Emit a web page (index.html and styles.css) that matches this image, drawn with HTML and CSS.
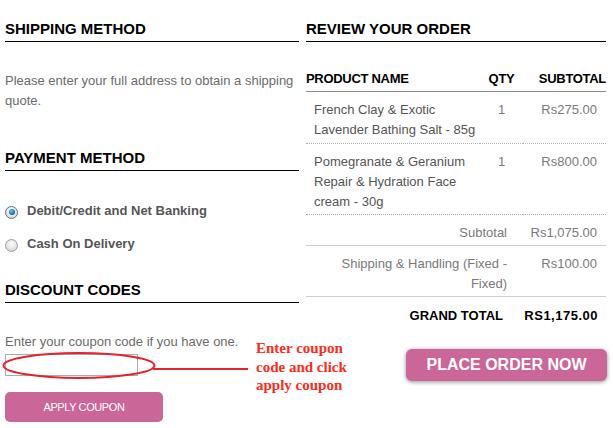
FILE: index.html
```html
<!DOCTYPE html>
<html lang="en">
<head>
<meta charset="utf-8">
<title>Checkout</title>
<link rel="stylesheet" href="styles.css">
</head>
<body>
<div class="page">
  <div class="col col-left">
    <h2 class="sec-title">SHIPPING METHOD</h2>
    <p class="note note-ship">Please enter your full address to obtain a shipping quote.</p>

    <h2 class="sec-title sec-pay">PAYMENT METHOD</h2>
    <label class="radio-row radio-first"><span class="radio checked"></span>Debit/Credit and Net Banking</label>
    <label class="radio-row radio-second"><span class="radio"></span>Cash On Delivery</label>

    <h2 class="sec-title sec-disc">DISCOUNT CODES</h2>
    <p class="note note-coupon">Enter your coupon code if you have one.</p>
    <input class="coupon-input" type="text" aria-label="Coupon code">
    <button class="btn btn-apply" type="button">APPLY COUPON</button>
  </div>

  <div class="col col-right">
    <h2 class="sec-title">REVIEW YOUR ORDER</h2>
    <table class="order">
      <colgroup>
        <col class="c-name"><col class="c-qty"><col class="c-sub">
      </colgroup>
      <thead>
        <tr><th class="th-name">PRODUCT NAME</th><th class="th-qty">QTY</th><th class="th-sub">SUBTOTAL</th></tr>
      </thead>
      <tbody>
        <tr class="item"><td class="name">French Clay &amp; Exotic Lavender Bathing Salt - 85g</td><td class="qty">1</td><td class="price">Rs275.00</td></tr>
        <tr class="item"><td class="name">Pomegranate &amp; Geranium Repair &amp; Hydration Face cream - 30g</td><td class="qty">1</td><td class="price">Rs800.00</td></tr>
        <tr class="total"><td class="label" colspan="2">Subtotal</td><td class="price">Rs1,075.00</td></tr>
        <tr class="total"><td class="label" colspan="2">Shipping &amp; Handling (Fixed - Fixed)</td><td class="price">Rs100.00</td></tr>
        <tr class="grand"><td class="label" colspan="2">GRAND TOTAL</td><td class="price">RS1,175.00</td></tr>
      </tbody>
    </table>
    <button class="btn btn-place" type="button">PLACE ORDER NOW</button>
  </div>

  <svg class="markup" width="613" height="428" viewBox="0 0 613 428" aria-hidden="true">
    <ellipse cx="79" cy="365.5" rx="75.5" ry="12.5" fill="none" stroke="#e8202a" stroke-width="2"/>
    <line x1="153" y1="369" x2="248" y2="369" stroke="#e8202a" stroke-width="2"/>
  </svg>
  <div class="markup-text">Enter coupon<br>code and click<br>apply coupon</div>
</div>
</body>
</html>
```

FILE: styles.css
```css
html, body {
  margin: 0;
  padding: 0;
  background: #fff;
}

body {
  font-family: "Liberation Sans", Arial, sans-serif;
  font-size: 13px;
  line-height: 20px;
  color: #6b6b6b;
}

.page {
  position: relative;
  width: 613px;
  height: 428px;
  overflow: hidden;
  box-sizing: border-box;
  padding: 20px 0 0 5px;
  display: grid;
  grid-template-columns: 294px 300px;
  column-gap: 7px;
  align-items: start;
}

.col {
  display: flex;
  flex-direction: column;
  align-items: flex-start;
}

.sec-title {
  align-self: stretch;
  margin: 0;
  font-size: 15px;
  line-height: 18px;
  font-weight: bold;
  color: #000;
  padding-bottom: 3px;
  border-bottom: 1px solid #000;
}

.note {
  margin: 0;
}

.note-ship { margin-top: 29px; }
.sec-pay { margin-top: 38px; }
.sec-disc { margin-top: 27px; }
.note-coupon { margin-top: 29px; }

.radio-row {
  display: flex;
  align-items: center;
  font-weight: bold;
  color: #555;
}

.radio-first { margin-top: 30px; }
.radio-second { margin-top: 13px; }

.radio {
  width: 11px;
  height: 11px;
  border-radius: 50%;
  border: 1px solid #9a9a9a;
  background: radial-gradient(circle at 50% 35%, #fcfcfc 0%, #e2e2e2 60%, #cfcfcf 100%);
  margin-right: 9px;
  margin-top: 2px;
  position: relative;
  flex: none;
}

.radio.checked {
  border-color: #5a7894;
}

.radio.checked::after {
  content: "";
  position: absolute;
  left: 2.5px;
  top: 2.5px;
  width: 6px;
  height: 6px;
  border-radius: 50%;
  background: radial-gradient(circle at 40% 35%, #6cc3f2 0%, #1f78b8 55%, #0d3f6e 100%);
}

.coupon-input {
  margin-top: 2px;
  width: 133px;
  height: 22px;
  box-sizing: border-box;
  border: 1px solid #acacac;
  background: #fff;
  padding: 0 4px;
  font: inherit;
}

.btn {
  border: 0;
  background: #cb6698;
  color: #fff;
  font-family: "Liberation Sans", Arial, sans-serif;
  cursor: pointer;
  padding: 0;
}

.btn-apply {
  margin-top: 16px;
  width: 158px;
  height: 30px;
  border-radius: 5px;
  font-size: 11px;
  letter-spacing: -0.4px;
}

/* Order table */
.order {
  margin-top: 27px;
  width: 300px;
  border-collapse: collapse;
  table-layout: fixed;
}

.c-name { width: 174px; }
.c-qty { width: 43px; }
.c-sub { width: 83px; }

.order th {
  padding: 0 0 2px;
  font-size: 13px;
  line-height: 20px;
  font-weight: bold;
  color: #000;
  letter-spacing: -0.3px;
  border-bottom: 1px solid #8a8a8a;
  white-space: nowrap;
}

.th-name { text-align: left; }
.th-qty { text-align: center; }
.th-sub { text-align: right; }

.order td {
  padding: 8px 0 2px;
  vertical-align: top;
  color: #7a7a7a;
}

.order .item td {
  border-bottom: 1px dotted #b0b0b0;
}

.order .item:first-child td {
  padding-bottom: 3px;
}

.order .total td {
  border-bottom: 1px solid #cfcfcf;
}

.order td.name {
  padding-left: 8px;
  color: #555;
}

.order td.qty {
  text-align: center;
  color: #7a7a7a;
}

.order td.price {
  text-align: right;
  padding-right: 9px;
  white-space: nowrap;
}

.order td.label {
  text-align: right;
  padding-left: 8px;
  padding-right: 16px;
}

.order .grand td {
  padding-top: 9px;
  padding-bottom: 0;
  font-weight: bold;
  color: #000;
}

.order .grand td.label {
  padding-right: 20px;
}

.order .grand td.price {
  letter-spacing: 0.5px;
  padding-right: 8px;
}

.btn-place {
  align-self: flex-end;
  margin-top: 23px;
  margin-right: -1px;
  width: 201px;
  height: 32px;
  border-radius: 6px;
  font-size: 16px;
  font-weight: bold;
  box-shadow: 0 1px 4px rgba(0, 0, 0, 0.45);
}

/* Red hand-drawn annotation overlay */
.markup {
  position: absolute;
  left: 0;
  top: 0;
  pointer-events: none;
}

.markup-text {
  position: absolute;
  left: 256px;
  top: 339px;
  font-family: "Liberation Serif", "Times New Roman", serif;
  font-size: 15px;
  line-height: 18.5px;
  font-weight: bold;
  color: #ff2a1a;
  white-space: nowrap;
  pointer-events: none;
}
```
